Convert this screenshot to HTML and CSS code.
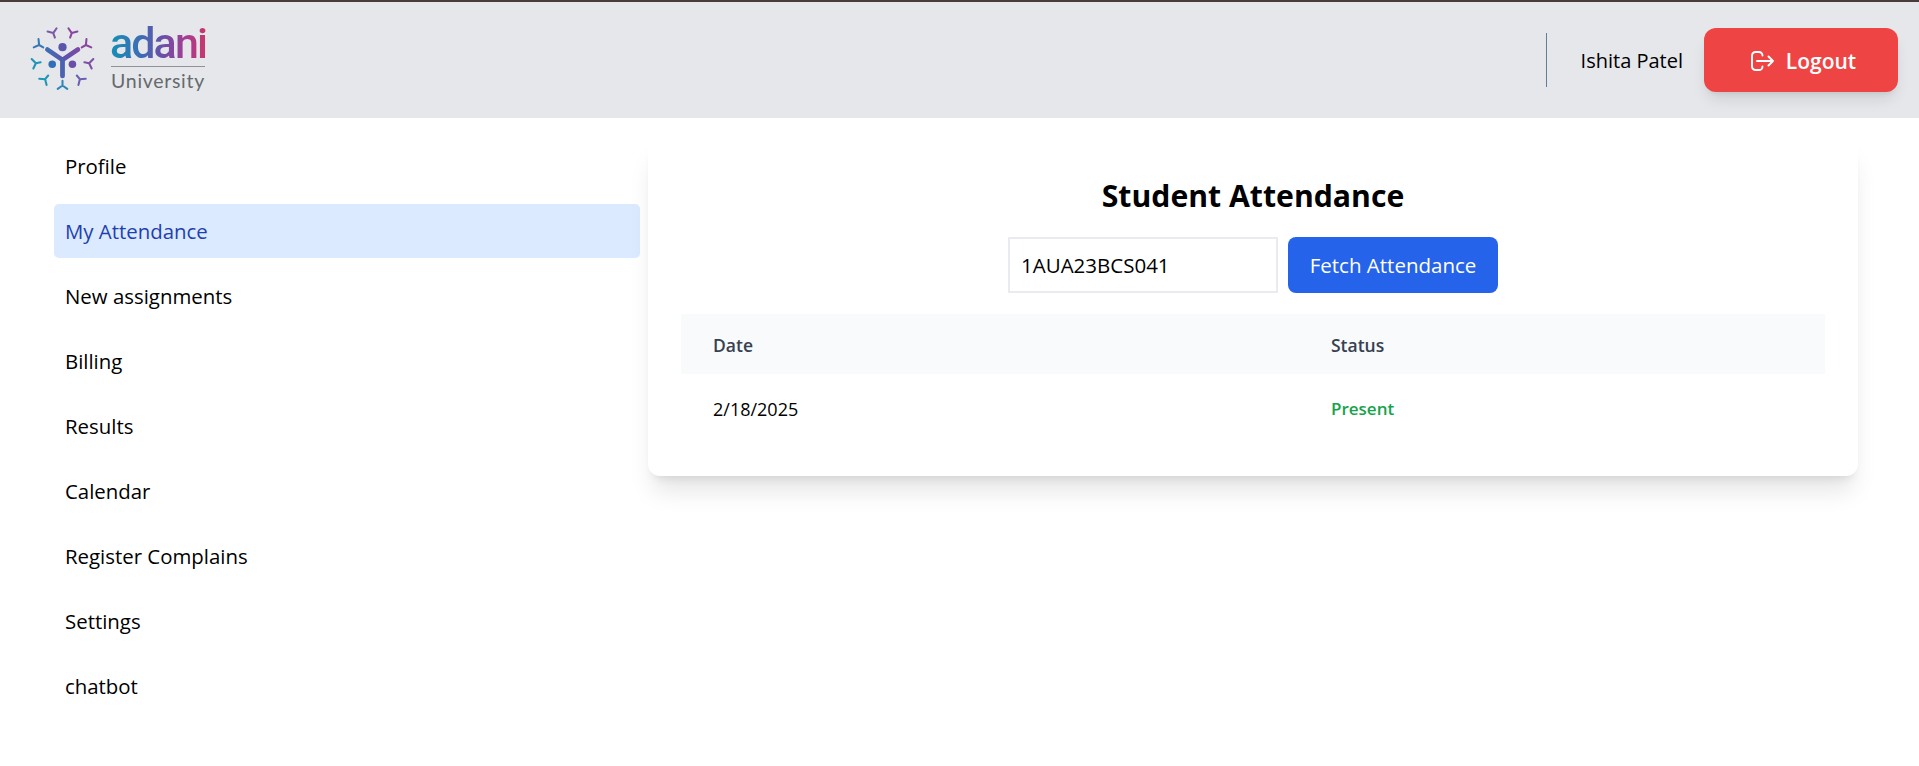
FILE: index.html
```html
<!DOCTYPE html>
<html lang="en">
<head>
<meta charset="utf-8">
<title>Student Attendance</title>
<link rel="stylesheet" href="styles.css">
</head>
<body>
<header class="topbar">
  <div class="logo">
    <svg class="logo-mark" viewBox="90 80 190 190" aria-hidden="true">
      <defs>
        <linearGradient id="markBody" x1="0" y1="0" x2="1" y2="0"><stop offset="0" stop-color="#3f6db5"/><stop offset="0.5" stop-color="#5a55ae"/><stop offset="1" stop-color="#7a4aa6"/></linearGradient>
        <g id="sprout" fill="none" stroke-width="6" stroke-linecap="round" stroke-linejoin="round">
          <path d="M185 110V96M185 96L171 86M185 96L199 86"/>
        </g>
      </defs>
      <use href="#sprout" stroke="#7b5aa8" transform="rotate(-20 185 175)"/>
      <use href="#sprout" stroke="#8a45a0" transform="rotate(20 185 175)"/>
      <use href="#sprout" stroke="#8a459f" transform="rotate(60 185 175)"/>
      <use href="#sprout" stroke="#7d4fa6" transform="rotate(100 185 175)"/>
      <use href="#sprout" stroke="#6a60b0" transform="rotate(140 185 175)"/>
      <use href="#sprout" stroke="#2f86b8" transform="rotate(180 185 175)"/>
      <use href="#sprout" stroke="#1d97b5" transform="rotate(-140 185 175)"/>
      <use href="#sprout" stroke="#1f93b8" transform="rotate(-100 185 175)"/>
      <use href="#sprout" stroke="#3a78b4" transform="rotate(-60 185 175)"/>
      <circle cx="185" cy="142" r="12" fill="#5b55ac"/>
      <circle cx="155" cy="192" r="11" fill="#2f6fb5"/>
      <circle cx="214" cy="192" r="11" fill="#6a4fa8"/>
      <path d="M141 149L185 179L230 149" fill="none" stroke="url(#markBody)" stroke-width="14" stroke-linecap="round" stroke-linejoin="round"/>
      <path d="M185 179V226" fill="none" stroke="#4a62b0" stroke-width="14" stroke-linecap="round"/>
    </svg>
    <div class="wordmark">
      <span class="wordmark-name">adani</span>
      <span class="wordmark-sub">University</span>
    </div>
  </div>
  <div class="account">
    <span class="account-name">Ishita Patel</span>
    <button class="logout" type="button">
      <svg class="logout-icon" viewBox="0 0 23 20" aria-hidden="true"><path d="M11.5 4.5A3.5 3.5 0 0 0 8 1H4.5A3.5 3.5 0 0 0 1 4.5v11A3.5 3.5 0 0 0 4.5 19H8a3.5 3.5 0 0 0 3.5-3.5M6 10h16M17.5 5.5L22 10l-4.5 4.5"/></svg>
      Logout
    </button>
  </div>
</header>
<div class="layout">
  <nav class="sidebar">
    <a class="nav-item">Profile</a>
    <a class="nav-item is-active">My Attendance</a>
    <a class="nav-item">New assignments</a>
    <a class="nav-item">Billing</a>
    <a class="nav-item">Results</a>
    <a class="nav-item">Calendar</a>
    <a class="nav-item">Register Complains</a>
    <a class="nav-item">Settings</a>
    <a class="nav-item">chatbot</a>
  </nav>
  <main class="content">
    <section class="card">
      <h1 class="card-title">Student Attendance</h1>
      <div class="fetch-row">
        <input class="fetch-input" type="text" value="1AUA23BCS041">
        <button class="fetch-button" type="button">Fetch Attendance</button>
      </div>
      <table class="records">
        <thead>
          <tr><th class="col-date">Date</th><th>Status</th></tr>
        </thead>
        <tbody>
          <tr><td>2/18/2025</td><td class="present">Present</td></tr>
        </tbody>
      </table>
    </section>
  </main>
</div>
</body>
</html>
```
FILE: styles.css
```css
* { box-sizing: border-box; }
html, body { margin: 0; height: 100%; }
body {
  font-family: "Open Sans", "Noto Sans", sans-serif;
  color: #000;
  background: #fff;
  overflow: hidden;
}
.topbar {
  height: 118px;
  background: #e5e7eb;
  border-top: 2px solid #4a3b3b;
  display: flex;
  align-items: center;
  justify-content: space-between;
  padding: 0 21px 0 30px;
}
.logo { display: flex; align-items: flex-start; gap: 16px; margin-top: -2px; }
.logo-mark { width: 65px; height: 65px; display: block; }
.wordmark { display: flex; flex-direction: column; align-items: center; width: 94px; margin-top: -2px; }
.wordmark-name {
  font-family: "Roboto", sans-serif;
  font-weight: 500;
  font-size: 43px;
  line-height: 38px;
  letter-spacing: -1.9px;
  background: linear-gradient(90deg, #1590b6 0%, #3a6fb5 30%, #6a4fa8 55%, #a83c92 80%, #c8386a 100%);
  -webkit-background-clip: text;
  background-clip: text;
  color: transparent;
}
.wordmark-sub {
  margin-top: 4px;
  padding-top: 2px;
  font-family: "Lato", sans-serif;
  font-size: 19.5px;
  line-height: 23px;
  letter-spacing: 0.7px;
  color: #666a6e;
  border-top: 1px solid #8f9296;
}
.account {
  display: flex;
  align-items: center;
  border-left: 1px solid #5f7f96;
  height: 54px;
  padding-left: 34px;
}
.account-name { font-size: 20px; margin-right: 21px; }
.logout {
  width: 194px;
  height: 64px;
  border: 0;
  border-radius: 12px;
  padding: 1px 0 0 5px;
  background: #ef4444;
  color: #fff;
  font: 600 21px "Open Sans", sans-serif;
  display: flex;
  align-items: center;
  justify-content: center;
  gap: 12px;
  box-shadow: 0 10px 15px -3px rgba(0,0,0,.1), 0 4px 6px -4px rgba(0,0,0,.1);
}
.logout-icon { width: 23px; height: 20px; fill: none; stroke: #fff; stroke-width: 1.9; stroke-linecap: round; stroke-linejoin: round; }
.layout { display: flex; }
.sidebar {
  width: 648px;
  padding: 21px 8px 0 54px;
  display: flex;
  flex-direction: column;
  gap: 11px;
}
.nav-item {
  height: 54px;
  padding: 0 11px;
  display: flex;
  align-items: center;
  font-size: 20.4px;
  border-radius: 5px;
}
.nav-item.is-active { background: #dbeafe; color: #1e40af; }
.content { flex: 1; padding: 20px 61px 0 0; }
.card {
  height: 338px;
  background: #fff;
  border-radius: 12px;
  padding: 33px 33px 0;
  box-shadow: 0 20px 25px -5px rgba(0,0,0,.1), 0 8px 10px -6px rgba(0,0,0,.1);
}
.card-title { margin: 0 0 17px; height: 49px; line-height: 49px; text-align: center; font-size: 30.2px; font-weight: 700; }
.fetch-row { display: flex; justify-content: center; gap: 10px; margin-bottom: 21px; }
.fetch-input {
  width: 270px;
  height: 56px;
  border: 2px solid #e9ebee;
  padding: 0 11px;
  font: 20.5px "Open Sans", sans-serif;
  color: #000;
  outline: 0;
}
.fetch-button {
  width: 210px;
  height: 56px;
  border: 0;
  border-radius: 8px;
  background: #2563eb;
  color: #fff;
  font: 20.5px "Open Sans", sans-serif;
}
.records { width: 100%; border-collapse: collapse; font-size: 18px; }
.records th {
  height: 60px;
  padding: 2px 32px 0;
  background: #f9fafb;
  color: #374151;
  font-size: 17.5px;
  font-weight: 600;
  text-align: left;
}
.records td { height: 72px; padding: 0 32px 3px; }
.col-date { width: 618px; }
.records .present { color: #16a34a; font-weight: 600; font-size: 17px; }
```
